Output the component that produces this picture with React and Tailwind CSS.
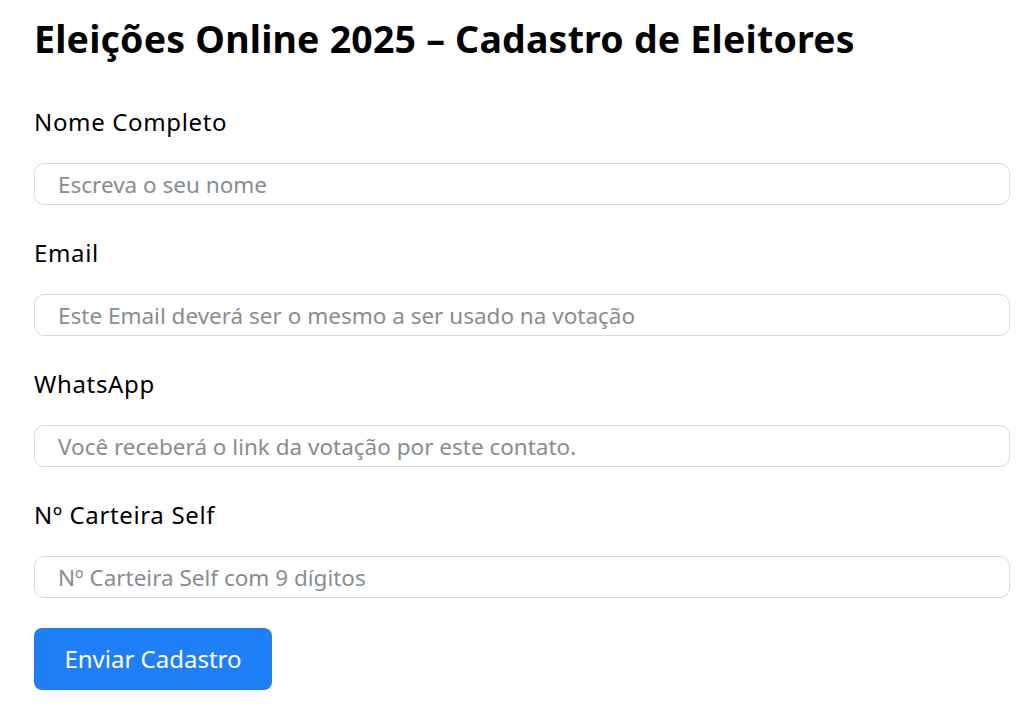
import React from 'react';

const fields = [
  { label: 'Nome Completo', placeholder: 'Escreva o seu nome', type: 'text' },
  { label: 'Email', placeholder: 'Este Email deverá ser o mesmo a ser usado na votação', type: 'email' },
  { label: 'WhatsApp', placeholder: 'Você receberá o link da votação por este contato.', type: 'tel' },
  { label: 'Nº Carteira Self', placeholder: 'Nº Carteira Self com 9 dígitos', type: 'text' },
];

const App = () => {
  return (
    <div className="min-h-screen bg-white pl-[34px] pr-[14px] pt-[19px]" style={{ fontFamily: '"Noto Sans", "Open Sans", sans-serif' }}>
      <h1 className="text-[37.5px] leading-[40px] font-bold text-black tracking-[0.2px]">
        Eleições Online 2025 – Cadastro de Eleitores
      </h1>

      <form className="mt-[48px]" onSubmit={(e) => e.preventDefault()}>
        {fields.map((f) => (
          <div key={f.label} className="mb-[33px]">
            <label className="block text-[24px] leading-[30px] text-black tracking-[0.65px]">{f.label}</label>
            <input
              type={f.type}
              placeholder={f.placeholder}
              className="mt-[26px] block w-full h-[42px] rounded-[10px] border border-[#d9d9d9] px-[23px] text-[22.5px] text-black placeholder:text-[#878d93] outline-none"
            />
          </div>
        ))}
        <button type="submit" className="-mt-[3px] h-[62px] w-[238px] rounded-[8px] bg-[#1f7ff7] text-white text-[24px]">
          Enviar Cadastro
        </button>
      </form>
    </div>
  );
};

export default App;
